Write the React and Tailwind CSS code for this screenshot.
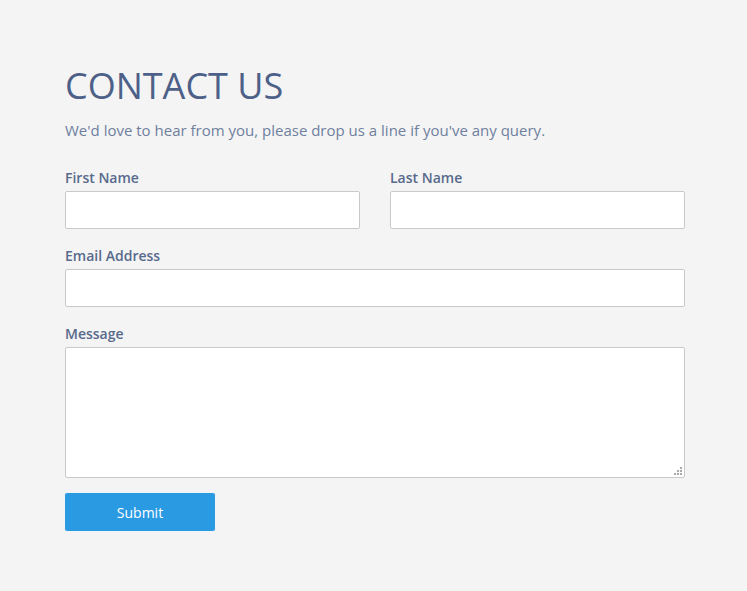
export default function App() {
  const label = "block text-[14px] leading-[24px] font-semibold text-[#586a8c] mb-[1px]";
  const input = "block w-full h-[38px] bg-white border border-[#c9c9c9] rounded-[2px] outline-none";
  return (
    <div className="min-h-[591px] w-full bg-[#f4f4f4]" style={{ fontFamily: '"Open Sans", sans-serif' }}>
      <div className="w-[620px] ml-[65px] pt-[64px]">
        <h1 className="text-[36px] leading-[43px] font-normal text-[#4d6088]">CONTACT US</h1>
        <p className="mt-[13px] text-[15px] leading-[20px] text-[#6f7f9e]">
          We'd love to hear from you, please drop us a line if you've any query.
        </p>
        <form className="mt-[26px]" onSubmit={(e) => e.preventDefault()}>
          <div className="flex gap-[30px]">
            <div className="flex-1">
              <label className={label}>First Name</label>
              <input className={input} />
            </div>
            <div className="flex-1">
              <label className={label}>Last Name</label>
              <input className={input} />
            </div>
          </div>
          <div className="mt-[15px]">
            <label className={label}>Email Address</label>
            <input className={input} />
          </div>
          <div className="mt-[15px]">
            <label className={label}>Message</label>
            <div className="relative">
              <textarea className="block w-full h-[131px] bg-white border border-[#c9c9c9] rounded-[2px] outline-none resize-none" />
              <svg className="absolute right-[3px] bottom-[3px]" width="8" height="8" viewBox="0 0 8 8">
                <g fill="#a9a9a9">
                  <rect x="6" y="0" width="2" height="2" />
                  <rect x="3" y="3" width="2" height="2" />
                  <rect x="6" y="3" width="2" height="2" />
                  <rect x="0" y="6" width="2" height="2" />
                  <rect x="3" y="6" width="2" height="2" />
                  <rect x="6" y="6" width="2" height="2" />
                </g>
              </svg>
            </div>
          </div>
          <button
            type="submit"
            className="mt-[15px] w-[150px] h-[38px] bg-[#2a9ae3] text-white text-[14px] rounded-[2px]"
          >
            Submit
          </button>
        </form>
      </div>
    </div>
  );
}
